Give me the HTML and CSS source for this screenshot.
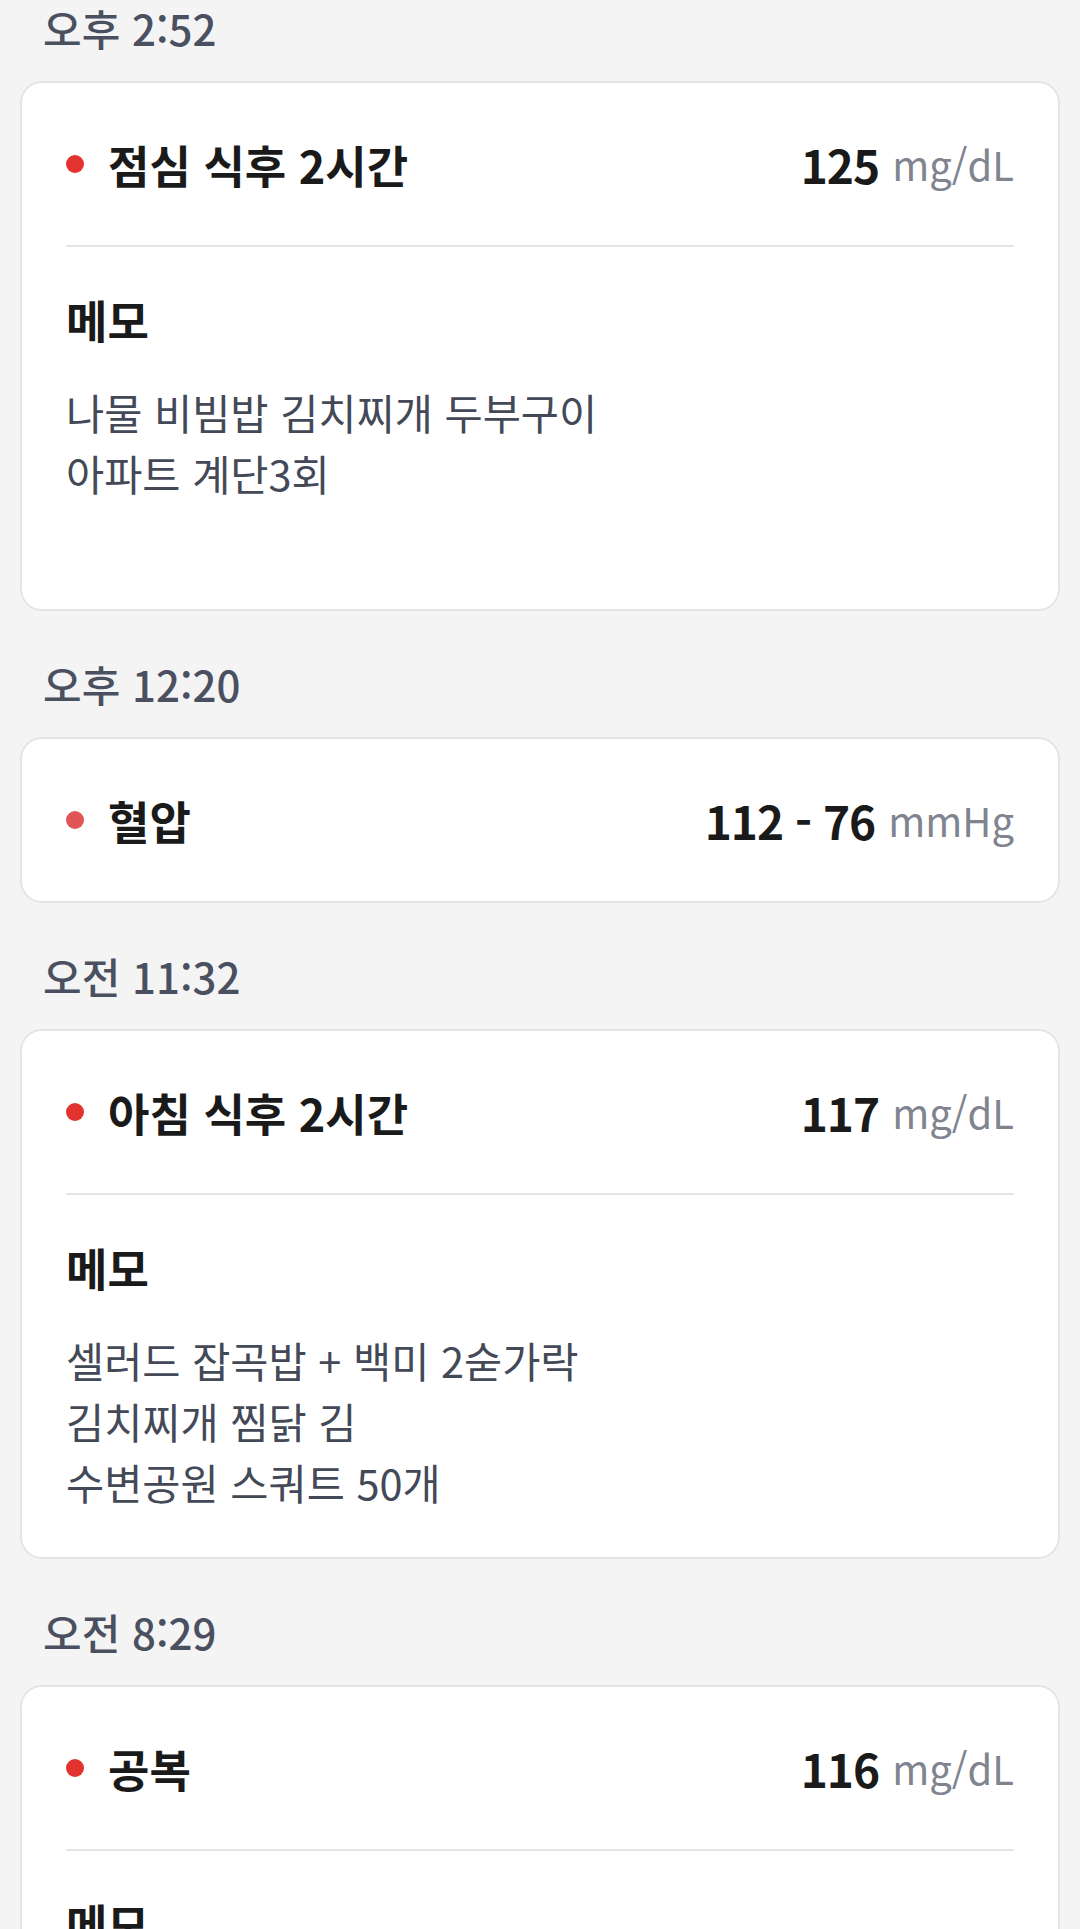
FILE: index.html
```html
<!DOCTYPE html>
<html lang="ko">
<head>
  <meta charset="UTF-8">
  <meta name="viewport" content="width=device-width, initial-scale=1.0">
  <title>기록</title>

  <link rel="stylesheet" href="styles.css">
</head>
<body>
  <div class="list">
    <div class="time">오후 2:52</div>
    <div class="card">
      <div class="head">
        <span class="dot"></span>
        <span class="title">점심 식후 2시간</span>
        <span class="value">125</span>
        <span class="unit">mg/dL</span>
      </div>
      <div class="memo">
        <div class="memo-title">메모</div>
        <div class="memo-text">
          <div>나물 비빔밥 김치찌개 두부구이</div>
          <div>아파트 계단3회</div>
          <div>&nbsp;</div>
        </div>
      </div>
    </div>

    <div class="time">오후 12:20</div>
    <div class="card">
      <div class="head">
        <span class="dot light"></span>
        <span class="title">혈압</span>
        <span class="value">112 - 76</span>
        <span class="unit">mmHg</span>
      </div>
    </div>

    <div class="time">오전 11:32</div>
    <div class="card">
      <div class="head">
        <span class="dot"></span>
        <span class="title">아침 식후 2시간</span>
        <span class="value">117</span>
        <span class="unit">mg/dL</span>
      </div>
      <div class="memo">
        <div class="memo-title">메모</div>
        <div class="memo-text">
          <div>셀러드 잡곡밥 + 백미 2숟가락</div>
          <div>김치찌개 찜닭 김</div>
          <div>수변공원 스쿼트 50개</div>
        </div>
      </div>
    </div>

    <div class="time">오전 8:29</div>
    <div class="card">
      <div class="head">
        <span class="dot"></span>
        <span class="title">공복</span>
        <span class="value">116</span>
        <span class="unit">mg/dL</span>
      </div>
      <div class="memo">
        <div class="memo-title">메모</div>
        <div class="memo-text">
          <div>&nbsp;</div>
        </div>
      </div>
    </div>
  </div>
</body>
</html>
```

FILE: styles.css
```css
body {
  margin: 0;
  background: #f4f4f4;
  font-family: "Noto Sans CJK KR", "Noto Sans", sans-serif;
}

.list {
  display: flex;
  flex-direction: column;
  padding: 0 20px;
}

.time {
  height: 56px;
  line-height: 56px;
  font-size: 42px;
  font-weight: 500;
  color: #4a5060;
  padding-left: 23px;
  margin-bottom: 25px;
}

.card {
  background: #fff;
  border: 2px solid #e4e4e4;
  border-radius: 22px;
  padding: 0 44px;
  margin-bottom: 45px;
}

.head {
  height: 162px;
  display: flex;
  align-items: center;
}

.dot {
  width: 18px;
  height: 18px;
  border-radius: 50%;
  background: #e3322f;
  margin-right: 24px;
}
.dot.light {
  background: #e05555;
}

.title {
  font-size: 45px;
  font-weight: bold;
  color: #1a1a1a;
  flex: 1;
}

.value {
  font-size: 46px;
  font-weight: bold;
  color: #1a1a1a;
  letter-spacing: -1px;
}

.unit {
  font-size: 40px;
  color: #80848f;
  margin-left: 13px;
}

.memo {
  border-top: 2px solid #e6e6e6;
  padding: 45px 0 44px;
}

.memo-title {
  font-size: 45px;
  font-weight: bold;
  color: #1a1a1a;
  line-height: 56px;
  margin-bottom: 34px;
}

.memo-text {
  font-size: 41.5px;
  line-height: 61px;
  color: #434957;
}
```
